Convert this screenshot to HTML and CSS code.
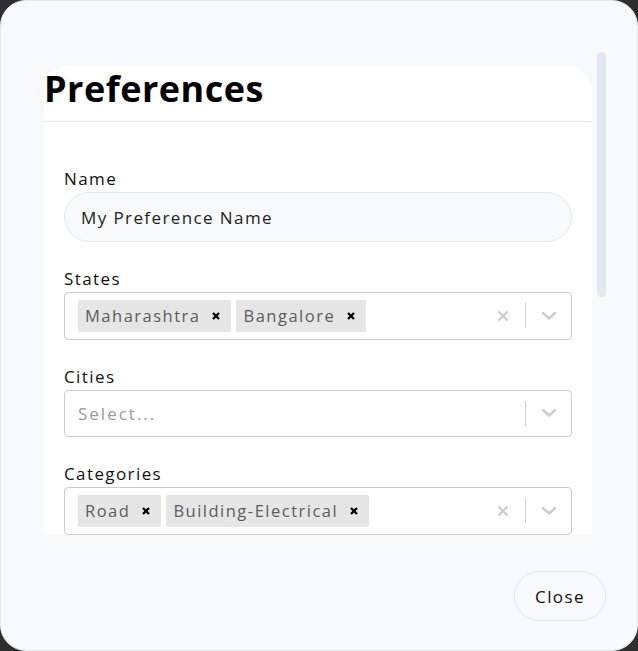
FILE: index.html
```html
<!DOCTYPE html>
<html lang="en">
<head>
<meta charset="utf-8">
<title>Preferences</title>
<link rel="stylesheet" href="styles.css">
</head>
<body>
<div class="modal">
  <div class="scroll-wrap">
    <div class="scroll">
      <div class="card">
        <div class="card-header"><h1 class="title">Preferences</h1></div>
        <div class="card-body">
          <div class="field">
            <label class="label">Name</label>
            <div class="text-input">My Preference Name</div>
          </div>
          <div class="field">
            <label class="label">States</label>
            <div class="select">
              <div class="values">
                <span class="chip"><span class="chip-text">Maharashtra</span><span class="chip-x"><svg viewBox="0 0 8 8" width="8" height="8"><path d="M1 1L7 7M7 1L1 7"/></svg></span></span>
                <span class="chip"><span class="chip-text">Bangalore</span><span class="chip-x"><svg viewBox="0 0 8 8" width="8" height="8"><path d="M1 1L7 7M7 1L1 7"/></svg></span></span>
              </div>
              <div class="indicators">
                <span class="ind clear"><svg viewBox="0 0 12 12" width="12" height="12"><path d="M1.5 1.5L10.5 10.5M10.5 1.5L1.5 10.5"/></svg></span>
                <span class="sep"></span>
                <span class="ind"><svg viewBox="0 0 16 10" width="16" height="10"><path d="M2 2L8 7.5L14 2"/></svg></span>
              </div>
            </div>
          </div>
          <div class="field">
            <label class="label">Cities</label>
            <div class="select">
              <div class="values"><span class="placeholder">Select...</span></div>
              <div class="indicators">
                <span class="sep"></span>
                <span class="ind"><svg viewBox="0 0 16 10" width="16" height="10"><path d="M2 2L8 7.5L14 2"/></svg></span>
              </div>
            </div>
          </div>
          <div class="field">
            <label class="label">Categories</label>
            <div class="select">
              <div class="values">
                <span class="chip"><span class="chip-text">Road</span><span class="chip-x"><svg viewBox="0 0 8 8" width="8" height="8"><path d="M1 1L7 7M7 1L1 7"/></svg></span></span>
                <span class="chip"><span class="chip-text">Building-Electrical</span><span class="chip-x"><svg viewBox="0 0 8 8" width="8" height="8"><path d="M1 1L7 7M7 1L1 7"/></svg></span></span>
              </div>
              <div class="indicators">
                <span class="ind clear"><svg viewBox="0 0 12 12" width="12" height="12"><path d="M1.5 1.5L10.5 10.5M10.5 1.5L1.5 10.5"/></svg></span>
                <span class="sep"></span>
                <span class="ind"><svg viewBox="0 0 16 10" width="16" height="10"><path d="M2 2L8 7.5L14 2"/></svg></span>
              </div>
            </div>
          </div>
        </div>
      </div>
    </div>
    <div class="track"><div class="thumb"></div></div>
  </div>
  <div class="footer">
    <button class="btn">Close</button>
  </div>
</div>
</body>
</html>
```

FILE: styles.css
```css
* { box-sizing: border-box; }
html, body { margin: 0; padding: 0; }
body {
  background: #2e2e2e;
  font-family: "Open Sans", "Noto Sans", sans-serif;
  color: #111;
  width: 638px;
  height: 651px;
  overflow: hidden;
}
.modal {
  width: 638px;
  height: 651px;
  background: #f8f9fb;
  border: 1px solid #e4e8ef;
  border-radius: 26px;
  padding: 51px 31px 29px 43px;
  display: flex;
  flex-direction: column;
}
.scroll-wrap {
  height: 483px;
  display: flex;
  gap: 5px;
}
.scroll {
  flex: 1;
  overflow: hidden;
  padding-top: 14px;
}
.track {
  width: 9px;
}
.thumb {
  height: 245px;
  background: #e2e8f0;
  border-radius: 5px;
}
.card {
  background: #fff;
  border-radius: 26px 26px 0 0;
  min-height: 600px;
}
.card-header {
  border-bottom: 1px solid #e4e8ef;
  height: 56px;
  padding-top: 1px;
}
.title {
  margin: 0;
  font-size: 36px;
  line-height: 44px;
  font-weight: 700;
  color: #000;
  letter-spacing: 0.5px;
}
.card-body {
  padding: 45px 20px 20px;
}
.field { margin-bottom: 25px; }
.label {
  display: block;
  font-size: 17px;
  line-height: 24px;
  font-weight: 500;
  color: #111;
  margin-bottom: 1px;
  letter-spacing: 1.4px;
}
.text-input {
  height: 50px;
  border: 1px solid #e4e8ef;
  background: #f8f9fb;
  border-radius: 25px;
  padding: 0 16px;
  display: flex;
  align-items: center;
  font-size: 17px;
  color: #222;
  letter-spacing: 1.4px;
}
.select {
  min-height: 47.5px;
  border: 1px solid #ccc;
  border-radius: 4px;
  display: flex;
  align-items: center;
  background: #fff;
}
.values {
  flex: 1;
  display: flex;
  align-items: center;
  gap: 5px;
  padding: 0 13px;
}
.placeholder { color: #999; font-size: 17px; letter-spacing: 2px; }
.chip {
  display: flex;
  align-items: center;
  background: #e6e6e6;
  border-radius: 2px;
  height: 32px;
}
.chip-text {
  font-size: 16.5px;
  color: #5c5c5c;
  padding: 0 6px 0 7px;
  letter-spacing: 1.5px;
}
.chip-x {
  display: flex;
  align-items: center;
  padding: 0 11px 0 6px;
  height: 100%;
}
.chip-x path { stroke: #000; stroke-width: 2.3; fill: none; }
.indicators {
  display: flex;
  align-items: center;
  align-self: stretch;
}
.ind {
  width: 45px;
  display: flex;
  align-items: center;
  justify-content: center;
}
.ind path { stroke: #ccc; stroke-width: 2.4; fill: none; stroke-linecap: round; stroke-linejoin: round; }
.clear path { stroke-width: 2.2; stroke-linecap: butt; }
.sep {
  width: 1px;
  height: 25px;
  background: #ccc;
}
.footer {
  flex: 1;
  display: flex;
  justify-content: flex-end;
  align-items: flex-end;
}
.btn {
  width: 92px;
  height: 50px;
  border-radius: 25px;
  border: 1px solid #e4e8ef;
  background: #f8f9fb;
  font-family: inherit;
  font-size: 17px;
  font-weight: 500;
  color: #111;
  letter-spacing: 1.4px;
  padding: 0;
}
```
